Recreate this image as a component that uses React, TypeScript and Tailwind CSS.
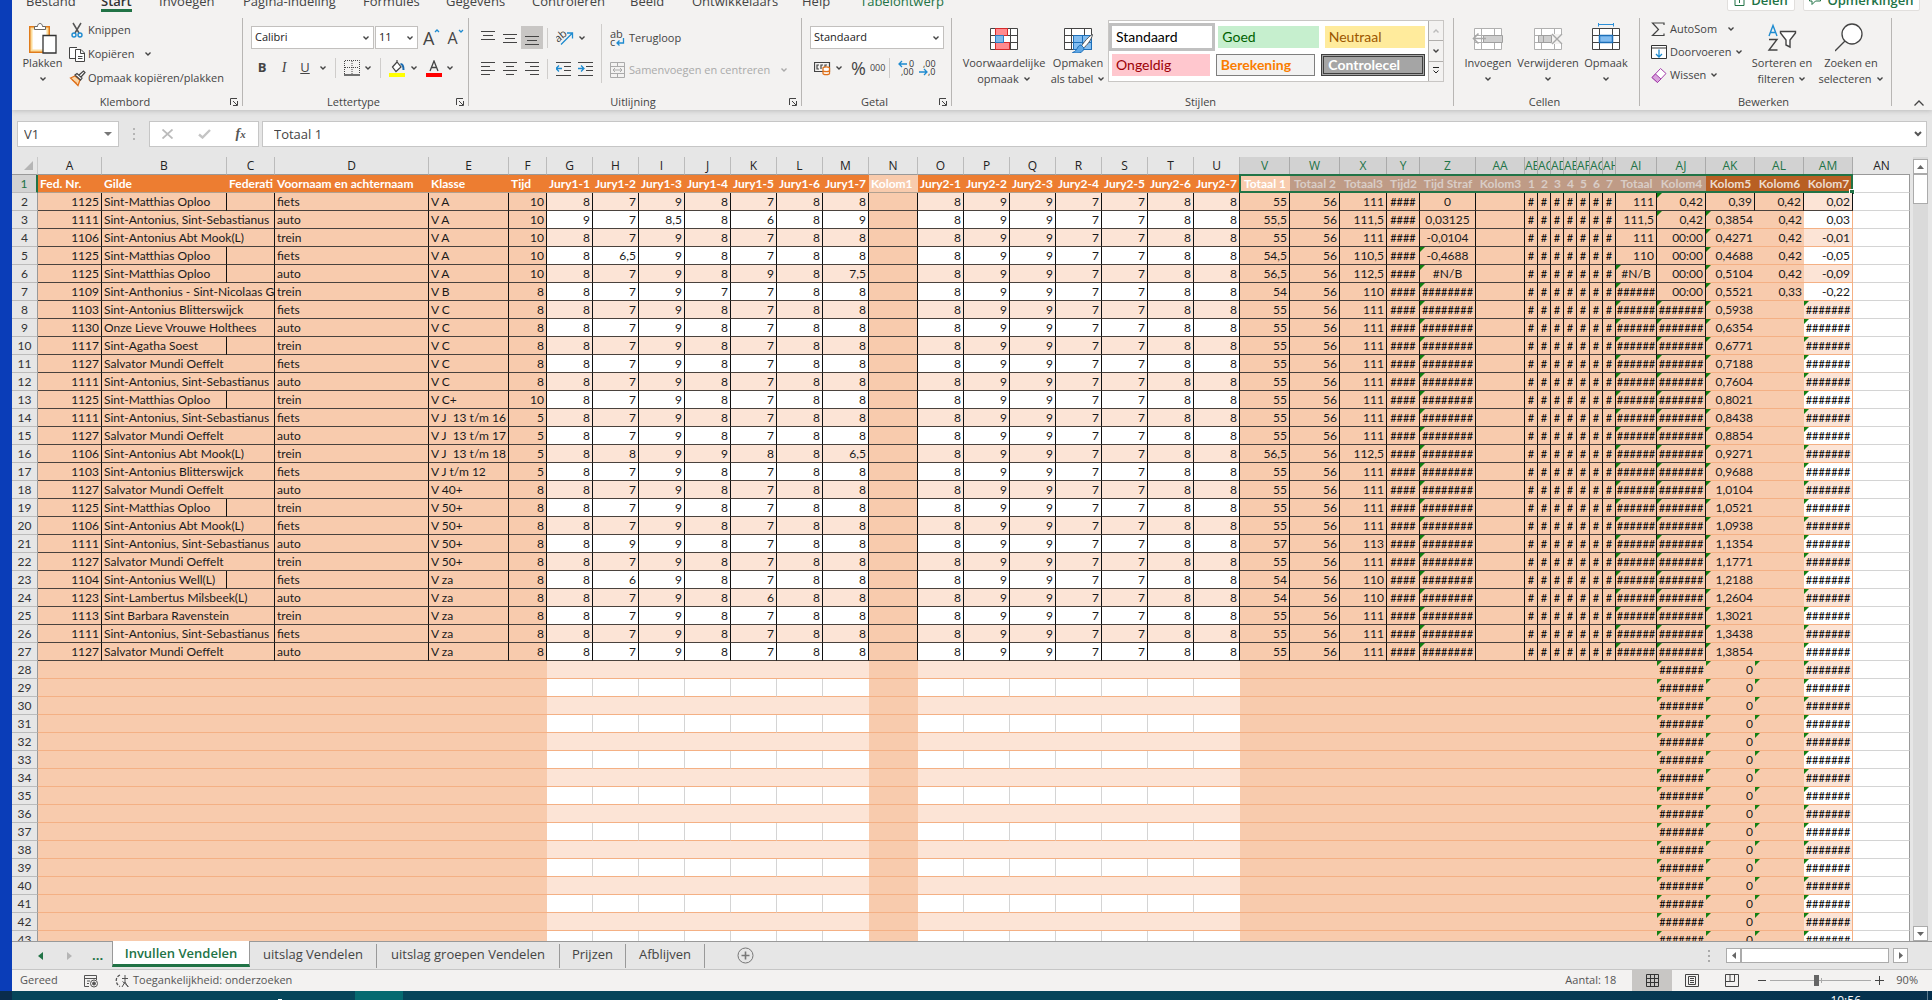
import React from "react";
import { clsx } from "clsx";

type Kids = { children?: React.ReactNode };

const Chev = ({ className = "text-[#444]" }: { className?: string }) => (
  <svg className={clsx("h-2 w-2 shrink-0", className)} viewBox="0 0 8 8" fill="none" stroke="currentColor" strokeWidth="1.4" aria-hidden="true">
    <path d="M1.5 2.5 4 5l2.5-2.5" />
  </svg>
);

const Launcher = () => (
  <button className="text-[#444]" aria-label="Meer opties">
    <svg className="size-2" viewBox="0 0 8 8" fill="none" stroke="currentColor">
      <path d="M.5 7V.5H7M3 3l4 4M7.500 3v4.500H3" />
    </svg>
  </button>
);

const Group = ({ label, launcher, className, children }: Kids & { label: string; launcher?: boolean; className: string }) => (
  <section className={clsx("flex", className)} aria-label={label}>
    <div className="flex min-w-0 flex-1 flex-col">
      <div className="flex flex-1 pt-2">{children}</div>
      <div className="flex h-4 items-center pr-1">
        <span className="w-2" />
        <span className="flex-1 text-center leading-4">{label}</span>
        <span className="flex w-2">{launcher && <Launcher />}</span>
      </div>
    </div>
    <div className="mt-1.5 mb-1 w-px shrink-0 bg-[#b8b6b4]" />
  </section>
);

const Sep = () => <span className="mx-1 h-5 w-px shrink-0 bg-[#cfcdcb]" />;

const Big = ({ icon, lines, arrow, className }: { icon: React.ReactNode; lines: string[]; arrow?: boolean; className: string }) => (
  <button className={clsx("flex shrink-0 flex-col items-center", className)}>
    <span className="flex h-[35px] items-center">{icon}</span>
    <span className="leading-4">{lines[0]}</span>
    <span className="flex h-4 items-center gap-1 leading-4">
      {lines[1]}
      {(arrow || lines[1]) && <Chev />}
    </span>
  </button>
);

const Small = ({ icon, text, arrow, gap = "gap-1", className }: { icon: React.ReactNode; text: string; arrow?: boolean; gap?: string; className?: string }) => (
  <button className={clsx("flex items-center whitespace-nowrap", className)}>
    <span className="flex w-[19px] shrink-0">{icon}</span>
    <span className={clsx("flex items-center", gap)}>
      {text}
      {arrow && <Chev />}
    </span>
  </button>
);

const Lines = ({ rows, label, active }: { rows: [number, number, number][]; label: string; active?: boolean }) => (
  <button aria-label={label} className={clsx("flex h-[23px] w-[22px] items-center justify-center", active && "bg-[#c8c6c4]")}>
    <svg width="14" height="16" viewBox="0 0 14 16" stroke="#444" fill="none">
      {rows.map(([x1, x2, y]) => (
        <path key={y} d={`M${x1} ${y}.5H${x2}`} />
      ))}
    </svg>
  </button>
);

const Combo = ({ label, value, className }: { label: string; value: string; className: string }) => (
  <label className={clsx("relative block h-[23px]", className)}>
    <span className="sr-only">{label}</span>
    <select className="h-full w-full appearance-none border border-[#c2c0be] bg-white px-[3px] text-[11px] text-[#222]" defaultValue={value}>
      <option>{value}</option>
    </select>
    <span className="pointer-events-none absolute top-2 right-1">
      <Chev />
    </span>
  </label>
);

const GridIcon = ({ children, color = "#444" }: Kids & { color?: string }) => (
  <svg width="32" height="30" viewBox="0 0 32 30" fill="none">
    <path d="M2.500 5.500h27v21h-27zM2.500 12.500h27M2.500 19.500h27M9.500 5.500v21M22.500 5.500v21" fill="#fff" stroke={color} />
    {children}
  </svg>
);

const PasteIcon = () => (
  <svg width="30" height="32" viewBox="0 0 30 32" fill="none">
    <path d="M2 5h19v25H2z" fill="#fff" stroke="#e07b1a" strokeWidth="2" />
    <path d="M3.500 6.500h16v22h-16z" stroke="#fbdc9a" strokeWidth="2" />
    <path d="M6.500 7.500v-3h3c0-4 5-4 5 0h3v3z" fill="#fff" stroke="#666" />
    <path d="M15 13.500h13V31H15z" fill="#fff" stroke="#333" strokeWidth="1.300" />
  </svg>
);

const CutIcon = () => (
  <svg width="16" height="16" viewBox="0 0 16 16" fill="none">
    <path d="m4 1 6 10M12 1 6 11" stroke="#555" strokeWidth="1.500" />
    <circle cx="5" cy="13" r="2" stroke="#1e8bd0" strokeWidth="1.400" />
    <circle cx="11" cy="13" r="2" stroke="#1e8bd0" strokeWidth="1.400" />
  </svg>
);

const CopyIcon = () => (
  <svg width="17" height="17" viewBox="0 0 17 17" fill="#fff" stroke="#444">
    <path d="M7 12.500H.5V1.500H8M6.500 15.500v-12H12l3.500 3.500v8.500zM11.500 3.500V7.500h4M9 10.500h4.500M9 12.500h4.500" />
  </svg>
);

const BrushIcon = () => (
  <svg width="17" height="17" viewBox="0 0 17 17" fill="none">
    <path d="M1.500 8 6 6l5 4-2 5.500z" fill="#fbd7a8" stroke="#e0711a" strokeWidth="1.300" />
    <path d="m3 9.500 5 4" stroke="#e0711a" />
    <path d="m6 5 2-1.500 5 4.500-1.500 2zM10 5l4.500-4 1.500 1.500L12 7" fill="#fff" stroke="#444" strokeWidth="1.200" />
  </svg>
);

const CondIcon = () => (
  <GridIcon>
    <path d="M7.500 5.500h12v7h-12zM7.500 19.500h14v7h-14z" fill="#ff8a8f" stroke="#d42a2a" />
    <path d="M7.500 12.500h8v7h-8z" fill="#7db9ea" stroke="#2b7cc4" />
  </GridIcon>
);

const TableIcon = () => (
  <GridIcon>
    <path d="M11.500 12.500h18v14h-18z" fill="#83bdf0" stroke="#1d6fb8" />
    <path d="M20.500 12.500v14M11.500 19.500h18" stroke="#1d6fb8" />
    <path d="M30.500 11.500c-3 1-9 8-11 11.500l2 2c3-2 8.500-9 9-13.500z" fill="#fff" stroke="#555" />
    <path d="M19 22c-4 0-3 6-8.500 7.500 5 1.500 11 .500 11.500-4.500z" fill="#5ea6e4" stroke="#1d6fb8" />
  </GridIcon>
);

const InsertIcon = () => (
  <GridIcon color="#b0b0b0">
    <path d="M11.500 12.500h19v7h-19z" fill="#cfcfcf" stroke="#a0a0a0" />
    <path d="M1 15.500h13M6.500 10.500l-5 5 5 5" stroke="#a8a8a8" strokeWidth="1.600" />
  </GridIcon>
);

const DeleteIcon = () => (
  <GridIcon color="#b0b0b0">
    <path d="M18 11h14v10H18z" fill="#f3f2f1" />
    <path d="M6.500 12.500h13v7h-13zM11.500 12.500v7" fill="#cfcfcf" stroke="#a0a0a0" />
    <path d="m20 11 10 10M30 11 20 21" stroke="#a8a8a8" strokeWidth="1.400" />
  </GridIcon>
);

const FormatIcon = () => (
  <GridIcon>
    <path d="M9.500 12.500h13v7h-13z" fill="#83bdf0" stroke="#1d6fb8" strokeWidth="1.500" />
    <path d="M8.500 1.500h15M8.500 0v3.500M23.500 0v3.500" stroke="#2b8fd8" />
  </GridIcon>
);

const SortIcon = () => (
  <svg width="30" height="30" viewBox="0 0 30 30" fill="none" strokeWidth="1.400">
    <path d="m2 13 4-10.500L10 13M3.500 9.500h5" stroke="#1e8bd0" />
    <path d="M2 16.500h8L2 27h8.500" stroke="#444" />
    <path d="M13.500 8.500h15v1.500L23 17v7l-4-2v-5l-5.500-7z" fill="#fff" stroke="#444" />
  </svg>
);

const FindIcon = () => (
  <svg width="32" height="32" viewBox="0 0 32 32" fill="none" stroke="#444" strokeWidth="1.300">
    <circle cx="17" cy="12" r="10" fill="#fff" />
    <path d="M10 19 0 29" />
  </svg>
);

const StyleCell = ({ text, className }: { text: string; className: string }) => (
  <button className={clsx("h-[22px] min-w-0 flex-1 px-1 text-left font-['Lato',sans-serif] text-sm", className)}>{text}</button>
);

const TABS: [string, string][] = [
  ["Bestand", "w-[75px]"],
  ["Start", "w-[58px]"],
  ["Invoegen", "w-[84px]"],
  ["Pagina-indeling", "w-[120px]"],
  ["Formules", "w-[83px]"],
  ["Gegevens", "w-[86px]"],
  ["Controleren", "w-[98px]"],
  ["Beeld", "w-[62px]"],
  ["Ontwikkelaars", "w-[110px]"],
  ["Help", "w-[58px]"],
  ["Tabelontwerp", "w-[90px]"],
];

const Ribbon = () => (
  <header className="relative z-10 shrink-0 bg-[#f3f2f1] text-[11px] text-[#444] shadow-[0_1px_5px_#bbb]">
    <nav className="flex h-3 items-end overflow-hidden text-[13px] leading-4 text-[#444]">
      <div className="flex min-w-0 flex-1 items-end pl-3.5">
        {TABS.map(([t, w]) => (
          <div key={t} className={clsx("flex shrink-0", w)}>
            <button
              className={clsx(
                "border-b-3 whitespace-nowrap",
                t === "Start" ? "border-[#217346] font-semibold text-[#333]" : t === "Tabelontwerp" ? "border-transparent text-[#217346]" : "border-transparent",
              )}
            >
              {t}
            </button>
          </div>
        ))}
      </div>
      <div className="flex gap-2 pr-3 font-semibold text-[#217346]">
        <button className="mb-px flex w-[68px] items-end justify-center gap-1.5 rounded-xs border border-[#e1dfdd] bg-white pb-0.5">
          <svg className="mb-0.5" width="11" height="12" viewBox="0 0 11 12" fill="none" stroke="#217346"><path d="M1 3.500v8h9v-8M5.500 9V0" /></svg>
          Delen
        </button>
        <button className="mb-px flex w-[117px] items-end justify-center gap-1.5 rounded-xs border border-[#e1dfdd] bg-white pb-0.5">
          <svg className="mb-0.5" width="12" height="12" viewBox="0 0 12 12" fill="none" stroke="#217346"><path d="M.5 0v7h2.500v3.500L6.500 7h5V0" /></svg>
          Opmerkingen
        </button>
      </div>
    </nav>

    <div className="flex h-[98px]">
      <Group label="Klembord" launcher className="w-[231px] shrink-0">
        <Big className="ml-2 w-[45px]" icon={<PasteIcon />} lines={["Plakken"]} arrow />
        <div className="ml-1 flex flex-col">
          <Small className="h-5" icon={<CutIcon />} text="Knippen" />
          <Small className="h-7" icon={<CopyIcon />} text="Kopiëren" arrow gap="gap-2.5" />
          <Small className="h-5" icon={<BrushIcon />} text="Opmaak kopiëren/plakken" />
        </div>
      </Group>

      <Group label="Lettertype" launcher className="w-[226px] shrink-0">
        <div className="flex flex-col gap-2 pt-1.5 pl-2">
          <div className="flex h-[23px] items-center gap-px">
            <Combo label="Lettertype" value="Calibri" className="w-[123px]" />
            <Combo label="Tekengrootte" value="11" className="w-[43px]" />
            <button className="ml-1 flex text-lg leading-5" aria-label="Lettertype vergroten">
              A<svg width="6" height="6" viewBox="0 0 6 6" fill="none" stroke="#1e8bd0" strokeWidth="1.300"><path d="m1 4 2-2 2 2" /></svg>
            </button>
            <button className="ml-1.5 flex text-base leading-5" aria-label="Lettertype verkleinen">
              A<svg width="6" height="6" viewBox="0 0 6 6" fill="none" stroke="#1e8bd0" strokeWidth="1.300"><path d="m1 2 2 2 2-2" /></svg>
            </button>
          </div>
          <div className="flex h-[22px] items-center text-[13px]">
            <button className="w-[22px] font-bold">B</button>
            <button className="w-[22px] font-['Liberation_Serif',serif] text-sm italic">I</button>
            <button className="w-[20px] underline">U</button>
            <Chev className="mx-1 text-[#444]" />
            <Sep />
            <button className="ml-1" aria-label="Randen">
              <svg width="16" height="16" viewBox="0 0 16 16" fill="none" stroke="#444"><path d="M.5 14V.5h15V14M8 1v14M1 7.500h14" strokeDasharray="1 1" /><path d="M0 15h16" strokeWidth="1.500" /></svg>
            </button>
            <Chev className="mx-1 text-[#444]" />
            <Sep />
            <button className="ml-1" aria-label="Opvulkleur">
              <svg width="17" height="17" viewBox="0 0 17 17" fill="none"><path d="M3.500 7 8 2l4 5-5 4.500zM8 2V0" fill="#fff" stroke="#444" strokeWidth="1.200" /><path d="M11.500 4c3 0 3 3 3 6" stroke="#1769b0" strokeWidth="2" /><path d="M0 13h16v4H0z" fill="#ff0" /></svg>
            </button>
            <Chev className="mx-1 text-[#444]" />
            <button className="ml-1" aria-label="Tekstkleur">
              <svg width="16" height="17" viewBox="0 0 16 17" fill="none"><path d="m4 11 4-10 4 10M5.500 7.500h5" stroke="#444" strokeWidth="1.300" /><path d="M0 13h16v4H0z" fill="#f00" /></svg>
            </button>
            <Chev className="mx-1 text-[#444]" />
          </div>
        </div>
      </Group>

      <Group label="Uitlijning" launcher className="w-[333px] shrink-0">
        <div className="flex flex-col gap-2 pt-1.5 pl-2">
          <div className="flex items-center">
            <Lines label="Boven uitlijnen" rows={[[0, 14, 1], [2, 12, 5], [0, 14, 9]]} />
            <Lines label="Midden uitlijnen" rows={[[0, 14, 4], [2, 12, 8], [0, 14, 12]]} />
            <Lines label="Onder uitlijnen" active rows={[[0, 14, 6], [2, 12, 10], [0, 14, 14]]} />
            <Sep />
            <button className="ml-1 flex items-center gap-1" aria-label="Afdrukstand">
              <svg width="18" height="17" viewBox="0 0 18 17" fill="none"><text x="-1" y="10" fontSize="11" fill="#444" transform="rotate(-40 6 8)">ab</text><path d="m5 15.500 11-11M11 4h5.500v5.500" stroke="#1e8bd0" strokeWidth="1.300" /></svg>
              <Chev />
            </button>
          </div>
          <div className="flex items-center">
            <Lines label="Links uitlijnen" rows={[[0, 14, 1], [0, 9, 5], [0, 14, 9], [0, 9, 13]]} />
            <Lines label="Centreren" rows={[[0, 14, 1], [3, 11, 5], [0, 14, 9], [3, 11, 13]]} />
            <Lines label="Rechts uitlijnen" rows={[[0, 14, 1], [5, 14, 5], [0, 14, 9], [5, 14, 13]]} />
            <Sep />
            <button className="ml-1" aria-label="Inspringing verkleinen">
              <svg width="15" height="14" viewBox="0 0 15 14" fill="none" stroke="#444"><path d="M0 .5h15M8 4.500h7M8 8.500h7M0 13.500h15" /><path d="M0 6.500h6M3 3.500l-3 3 3 3" stroke="#1e8bd0" strokeWidth="1.300" /></svg>
            </button>
            <button className="ml-[7px]" aria-label="Inspringing vergroten">
              <svg width="15" height="14" viewBox="0 0 15 14" fill="none" stroke="#444"><path d="M0 .5h15M8 4.500h7M8 8.500h7M0 13.500h15" /><path d="M0 6.500h6M3 3.500l3 3-3 3" stroke="#1e8bd0" strokeWidth="1.300" /></svg>
            </button>
          </div>
        </div>
        <div className="mt-1 ml-2 h-[59px] w-px bg-[#cfcdcb]" />
        <div className="flex flex-col gap-2 pt-1.5 pl-2">
          <Small className="h-6" text="Terugloop" icon={<svg width="15" height="17" viewBox="0 0 15 17" fill="none"><text x="0" y="8" fontSize="11" fill="#444">ab</text><text x="0" y="16" fontSize="11" fill="#444">c</text><path d="M13.500 8v5H7M9.500 10.500 7 13l2.500 2.500" stroke="#1e8bd0" strokeWidth="1.300" /></svg>} />
          <button className="flex h-6 items-center whitespace-nowrap text-[#aaa]">
            <svg className="mr-1" width="15" height="16" viewBox="0 0 15 16" fill="none" stroke="#aaa"><path d="M.5.5h14v15H.5zM.5 4.500h14M.5 11.500h14M7.500.5v4M7.500 11.500v4M3 8h9M5 6 3 8l2 2M10 6l2 2-2 2" /></svg>
            Samenvoegen en centreren
            <Chev className="ml-2.5 text-[#aaa]" />
          </button>
        </div>
      </Group>

      <Group label="Getal" launcher className="w-[150px] shrink-0">
        <div className="flex flex-col gap-2 pt-1.5 pl-2">
          <Combo label="Getalnotatie" value="Standaard" className="w-[134px]" />
          <div className="flex h-[22px] items-center">
            <button className="ml-1 flex items-center gap-1" aria-label="Financiële getalnotatie">
              <svg width="17" height="15" viewBox="0 0 17 15" fill="none"><path d="M.5 1.500h15v9H.5zM5 4H3v4h2M9 4H7v4M13 4h-2v3" stroke="#444" strokeWidth="1.200" /><path d="M9 7c0-1.500 6.500-1.500 6.500 0v5.500c0 1.500-6.500 1.500-6.500 0zM9 9.500c0 1.500 6.500 1.500 6.500 0" fill="#fff" stroke="#e0711a" strokeWidth="1.300" /></svg>
              <Chev />
            </button>
            <button className="ml-2 text-lg leading-5">%</button>
            <button className="ml-1 text-[9px]">000</button>
            <Sep />
            <button className="ml-1" aria-label="Meer decimalen">
              <svg width="17" height="16" viewBox="0 0 17 16" fill="none"><text x="11" y="7" fontSize="9" fill="#333">0</text><text x="3" y="15" fontSize="9" fill="#333">,00</text><path d="M9 4H1M4 1 1 4l3 3" stroke="#1e8bd0" strokeWidth="1.300" /></svg>
            </button>
            <button className="ml-1" aria-label="Minder decimalen">
              <svg width="17" height="16" viewBox="0 0 17 16" fill="none"><text x="4" y="7" fontSize="9" fill="#333">,00</text><text x="9" y="15" fontSize="9" fill="#333">,0</text><path d="M0 12h8M5 9l3 3-3 3" stroke="#1e8bd0" strokeWidth="1.300" /></svg>
            </button>
          </div>
        </div>
      </Group>

      <Group label="Stijlen" className="min-w-[400px] flex-1">
        <Big className="ml-2 w-[88px]" icon={<CondIcon />} lines={["Voorwaardelijke", "opmaak"]} />
        <Big className="w-[60px]" icon={<TableIcon />} lines={["Opmaken", "als tabel"]} />
        <div className="mr-[9px] flex h-[62px] min-w-0 flex-1 border border-[#c8c6c4] bg-white">
          <div className="flex min-w-0 flex-1 flex-col gap-1.5 p-[3px] pt-[5px]">
            <div className="flex gap-1.5">
              <StyleCell text="Standaard" className="leading-5 text-black outline-3 outline-[#c0c0c0]" />
              <StyleCell text="Goed" className="bg-[#c6efce] leading-5 text-[#006100]" />
              <StyleCell text="Neutraal" className="bg-[#ffeb9c] leading-5 text-[#9c5700]" />
            </div>
            <div className="flex gap-1.5">
              <StyleCell text="Ongeldig" className="bg-[#ffc7ce] leading-5 text-[#9c0006]" />
              <StyleCell text="Berekening" className="border border-[#7f7f7f] bg-[#f2f2f2] leading-4 font-bold text-[#fa7d00]" />
              <StyleCell text="Controlecel" className="border-3 border-double border-[#3f3f3f] bg-[#a5a5a5] leading-3 font-bold text-white" />
            </div>
          </div>
          <div className="flex w-[15px] flex-col divide-y divide-[#b0aeac] border-l border-[#b0aeac] bg-[#f3f2f1]">
            <button className="flex flex-1 items-center justify-center" aria-label="Vorige stijlen"><Chev className="rotate-180 text-[#bbb]" /></button>
            <button className="flex flex-1 items-center justify-center" aria-label="Volgende stijlen"><Chev /></button>
            <button className="flex flex-1 items-center justify-center" aria-label="Alle stijlen">
              <svg width="8" height="8" viewBox="0 0 8 8" fill="none" stroke="#222"><path d="M1 .5h6M1.500 3.500 4 6l2.500-2.500" /></svg>
            </button>
          </div>
        </div>
      </Group>

      <Group label="Cellen" className="w-[186px] shrink-0">
        <Big className="ml-1 w-[60px]" icon={<InsertIcon />} lines={["Invoegen"]} arrow />
        <Big className="w-[60px]" icon={<DeleteIcon />} lines={["Verwijderen"]} arrow />
        <Big className="w-[56px]" icon={<FormatIcon />} lines={["Opmaak"]} arrow />
      </Group>

      <Group label="Bewerken" className="w-[252px] shrink-0">
        <div className="flex w-[102px] shrink-0 flex-col pl-[11px]">
          <Small className="h-[18px]" text="AutoSom" arrow gap="gap-2.5" icon={<svg width="14" height="15" viewBox="0 0 14 15" fill="none" stroke="#444" strokeWidth="1.200"><path d="M13 3V1H1.500l6 6.500-6 6H13v-2" /></svg>} />
          <Small className="h-7" text="Doorvoeren" arrow icon={<svg width="16" height="15" viewBox="0 0 16 15" fill="none"><path d="M.5.5h15v13H.5zM.5 3h15" fill="#fff" stroke="#333" /><path d="M8 4.500v7M5 9l3 3 3-3" stroke="#1e8bd0" strokeWidth="1.300" /></svg>} />
          <Small className="h-[18px]" text="Wissen" arrow icon={<svg width="16" height="15" viewBox="0 0 16 15" fill="none" stroke="#a33eaa"><path d="m1 9.500 8.500-9L15 5.500l-8.500 9z" fill="#fff" /><path d="M1 9.500 4.500 6 10 11l-3.500 3.500z" fill="#d9a3dd" /></svg>} />
        </div>
        <Big className="ml-1 w-[72px]" icon={<SortIcon />} lines={["Sorteren en", "filteren"]} />
        <Big className="w-[66px]" icon={<FindIcon />} lines={["Zoeken en", "selecteren"]} />
      </Group>
      <div className="flex w-10 shrink-0 items-end justify-center pb-1">
        <button aria-label="Lint samenvouwen" className="ml-3.5">
          <svg width="10" height="6" viewBox="0 0 10 6" fill="none" stroke="#444" strokeWidth="1.300"><path d="m.5 5.500 4.500-4.500 4.500 4.500" /></svg>
        </button>
      </div>
    </div>
  </header>
);

const FormulaBar = () => (
  <div className="flex h-[47px] shrink-0 pt-[11px] pr-[5px] pl-[5px] text-[13px] text-[#444]">
    <div className="flex h-[26px] w-[102px] items-center border border-[#c6c6c6] bg-white pr-1.5">
      <input aria-label="Naamvak" defaultValue="V1" className="min-w-0 flex-1 bg-transparent pt-0.5 pl-1.5 outline-none" />
      <svg width="8" height="4" viewBox="0 0 8 4" fill="#777"><path d="M0 0h8L4 4z" /></svg>
    </div>
    <div className="flex h-[26px] w-[30px] flex-col items-center justify-center gap-[3px]">
      <i className="size-0.5 bg-[#b5b5b5]" /><i className="size-0.5 bg-[#b5b5b5]" /><i className="size-0.5 bg-[#b5b5b5]" />
    </div>
    <div className="flex h-[26px] w-[110px] items-center justify-around border border-[#c6c6c6] bg-white">
      <button aria-label="Annuleren"><svg width="11" height="10" viewBox="0 0 11 10" stroke="#bbb" strokeWidth="1.800"><path d="m.5.5 10 9M10.500.5l-10 9" /></svg></button>
      <button aria-label="Invoeren"><svg width="13" height="10" viewBox="0 0 13 10" fill="none" stroke="#c4c4c4" strokeWidth="2.400"><path d="m1 5.500 3.500 3L12 1" /></svg></button>
      <button className="font-['Liberation_Serif',serif] text-sm leading-4 font-bold text-[#555] italic">f<span className="text-[11px]">x</span></button>
    </div>
    <div className="ml-[3px] flex h-[26px] min-w-0 flex-1 items-center border border-[#c6c6c6] bg-white pr-1">
      <input aria-label="Formule" defaultValue="Totaal 1" className="min-w-0 flex-1 bg-transparent pt-0.5 pl-[11px] outline-none" />
      <svg width="8" height="6" viewBox="0 0 8 6" fill="none" stroke="#555" strokeWidth="2"><path d="m1 1 3 3 3-3" /></svg>
    </div>
  </div>
);

const COLS: [string, number, string][] = [
  ["A", 64, "Fed. Nr."], ["B", 125, "Gilde"], ["C", 48, "Federati"], ["D", 154, "Voornaam en achternaam"], ["E", 80, "Klasse"], ["F", 38, "Tijd"],
  ["G", 46, "Jury1-1"], ["H", 46, "Jury1-2"], ["I", 46, "Jury1-3"], ["J", 46, "Jury1-4"], ["K", 46, "Jury1-5"], ["L", 46, "Jury1-6"], ["M", 46, "Jury1-7"],
  ["N", 49, "Kolom1"],
  ["O", 46, "Jury2-1"], ["P", 46, "Jury2-2"], ["Q", 46, "Jury2-3"], ["R", 46, "Jury2-4"], ["S", 46, "Jury2-5"], ["T", 46, "Jury2-6"], ["U", 46, "Jury2-7"],
  ["V", 50, "Totaal 1"], ["W", 50, "Totaal 2"], ["X", 47, "Totaal3"], ["Y", 33, "Tijd2"], ["Z", 56, "Tijd Straf"], ["AA", 49, "Kolom3"],
  ["AB", 13, "1"], ["AC", 13, "2"], ["AD", 13, "3"], ["AE", 13, "4"], ["AF", 13, "5"], ["AG", 13, "6"], ["AH", 13, "7"],
  ["AI", 41, "Totaal"], ["AJ", 49, "Kolom4"], ["AK", 49, "Kolom5"], ["AL", 49, "Kolom6"], ["AM", 49, "Kolom7"],
];
const V = 21, AI = 34, AJ = 35, AK = 36, AL = 37, AM = 38;

const MATTHIAS = "Sint-Matthias Oploo", SEB = "Sint-Antonius, Sint-Sebastianus", MOOK = "Sint-Antonius Abt Mook(L)", SALV = "Salvator Mundi Oeffelt", BLIT = "Sint-Antonius Blitterswijck";
const STD = "8 7 9 8 7 8 8";

type Row = [string, string, string, string, string, string, string, string, string];
const ROWS: Row[] = [
  ["1125", MATTHIAS, "fiets", "V A", "10", STD, "55", "111", "0,39"],
  ["1111", SEB, "auto", "V A", "10", "9 7 8,5 8 6 8 9", "55,5", "111,5", "0,3854"],
  ["1106", MOOK, "trein", "V A", "10", STD, "55", "111", "0,4271"],
  ["1125", MATTHIAS, "fiets", "V A", "10", "8 6,5 9 8 7 8 8", "54,5", "110,5", "0,4688"],
  ["1125", MATTHIAS, "auto", "V A", "10", "8 7 9 8 9 8 7,5", "56,5", "112,5", "0,5104"],
  ["1109", "Sint-Anthonius - Sint-Nicolaas G", "trein", "V B", "8", "8 7 9 7 7 8 8", "54", "110", "0,5521"],
  ["1103", BLIT, "fiets", "V C", "8", STD, "55", "111", "0,5938"],
  ["1130", "Onze Lieve Vrouwe Holthees", "auto", "V C", "8", STD, "55", "111", "0,6354"],
  ["1117", "Sint-Agatha Soest", "trein", "V C", "8", STD, "55", "111", "0,6771"],
  ["1127", SALV, "fiets", "V C", "8", STD, "55", "111", "0,7188"],
  ["1111", SEB, "auto", "V C", "8", STD, "55", "111", "0,7604"],
  ["1125", MATTHIAS, "trein", "V C+", "10", STD, "55", "111", "0,8021"],
  ["1111", SEB, "fiets", "V J  13 t/m 16", "5", STD, "55", "111", "0,8438"],
  ["1127", SALV, "auto", "V J  13 t/m 17", "5", STD, "55", "111", "0,8854"],
  ["1106", MOOK, "trein", "V J  13 t/m 18", "5", "8 8 9 9 8 8 6,5", "56,5", "112,5", "0,9271"],
  ["1103", BLIT, "fiets", "V J t/m 12", "5", STD, "55", "111", "0,9688"],
  ["1127", SALV, "auto", "V 40+", "8", STD, "55", "111", "1,0104"],
  ["1125", MATTHIAS, "trein", "V 50+", "8", STD, "55", "111", "1,0521"],
  ["1106", MOOK, "fiets", "V 50+", "8", STD, "55", "111", "1,0938"],
  ["1111", SEB, "auto", "V 50+", "8", "8 9 9 8 7 8 8", "57", "113", "1,1354"],
  ["1127", SALV, "trein", "V 50+", "8", STD, "55", "111", "1,1771"],
  ["1104", "Sint-Antonius Well(L)", "fiets", "V za", "8", "8 6 9 8 7 8 8", "54", "110", "1,2188"],
  ["1123", "Sint-Lambertus Milsbeek(L)", "auto", "V za", "8", "8 7 9 8 6 8 8", "54", "110", "1,2604"],
  ["1113", "Sint Barbara Ravenstein", "trein", "V za", "8", STD, "55", "111", "1,3021"],
  ["1111", SEB, "fiets", "V za", "8", STD, "55", "111", "1,3438"],
  ["1127", SALV, "auto", "V za", "8", STD, "55", "111", "1,3854"],
];
const NO_SPILL = [2, 5, 6, 10, 13, 19, 23];
const Z = ["0", "0,03125", "-0,0104", "-0,4688", "#N/B"];
const TOT = ["111", "111,5", "111", "110", "#N/B"];
const TIME = ["0,42", "0,42", "00:00", "00:00", "00:00", "00:00"];
const ALV = ["0,42", "0,42", "0,42", "0,42", "0,42", "0,33"];
const AMV = ["0,02", "0,03", "-0,01", "-0,05", "-0,09", "-0,22"];

function valuesFor(n: number): string[] {
  const out: string[] = Array(39).fill("");
  if (n > 27) {
    out[AJ] = out[AM] = "#######";
    out[AK] = "0";
    return out;
  }
  const i = n - 2;
  const r = ROWS[i];
  return [
    r[0], r[1], "", r[2], r[3], r[4], ...r[5].split(" "), "", ..."8 9 9 7 7 8 8".split(" "),
    r[6], "56", r[7], "####", Z[i] ?? "########", "", ...Array(7).fill("#"),
    TOT[i] ?? "######", TIME[i] ?? "#######", r[8], ALV[i] ?? "", AMV[i] ?? "#######",
  ];
}

function flagged(n: number, c: number): boolean {
  if (c === 25) return n >= 5 && n <= 27;
  if (c === AI) return n >= 6 && n <= 27;
  if (c === AJ) return n <= 3 || n >= 8;
  if (c === AK) return n >= 3;
  if (c === AL) return n >= 28;
  if (c === AM) return n >= 8;
  return false;
}

const isJury = (c: number) => (c >= 6 && c <= 12) || (c >= 14 && c <= 20);

const BodyRow = ({ n }: { n: number }) => {
  const vals = valuesFor(n);
  const even = n % 2 === 0;
  const spill = n <= 27 && !NO_SPILL.includes(n);
  return (
    <tr className="h-[18px]">
      <RowHead n={n} />
      {vals.map((v, c) => {
        if (c === 2 && spill) return null;
        const banded = isJury(c) || c === AM;
        const inked = (n <= 27 && c <= AJ) || (n === 2 && c >= AK);
        const hashes = v.startsWith("##") || v === "#";
        return (
          <td
            key={c}
            colSpan={c === 1 && spill ? 2 : 1}
            className={clsx(
              "relative overflow-hidden border-b p-0 whitespace-pre",
              banded ? (even ? "bg-[#fce4d6]" : "bg-white") : "bg-[#f8cbad]",
              inked ? "border-b-[#4a423d]" : "border-b-[#f4b084]",
              inked && "border-r border-r-[#111]",
              !inked && c === AM && "border-r border-r-[#f4b084]",
              n > 27 && isJury(c) && !even && c !== 12 && c !== 20 && "border-r border-r-[#d4d4d4]",
              hashes || (c === 25 || (c === AI && v === "#N/B")) ? "text-center" : c >= 1 && c <= 4 ? "pl-0.5 text-left" : "pr-0.5 text-right",
              hashes && "text-[11px] text-black",
            )}
          >
            {flagged(n, c) && <i className="absolute top-0 left-0 size-0 border-t-5 border-r-5 border-t-[#128012] border-r-transparent" />}
            {v}
          </td>
        );
      })}
      <td className="border-r border-b border-r-[#999] border-b-[#d4d4d4] bg-white p-0" />
    </tr>
  );
};

const RowHead = ({ n }: { n: number }) => (
  <th scope="row" className={clsx("border-r border-b p-0 text-center text-xs leading-[17px] font-normal", n === 1 ? "border-r-2 border-r-[#217346] border-b-[#bbb] bg-[#d2d2d2] text-[#217346]" : "border-r-[#999] border-b-[#bbb] bg-[#e6e6e6] text-[#333]")}>
    {n}
  </th>
);

const Sheet = () => (
  <div className="flex min-h-0 flex-1 overflow-hidden">
    <div className="min-w-0 flex-1 overflow-hidden">
      <table className="w-full table-fixed border-separate border-spacing-0 font-['Lato',sans-serif] text-xs leading-[17px] text-[#1a1a1a]">
        <colgroup>
          <col style={{ width: 26 }} />
          {COLS.map(([l, w]) => <col key={l} style={{ width: w }} />)}
          <col />
        </colgroup>
        <thead className="font-['Open_Sans',sans-serif]">
          <tr className="h-[18px]">
            <th className="border-r border-b border-r-[#c9c9c9] border-b-[#999] p-0">
              <svg className="mr-1 ml-auto" width="9" height="9" viewBox="0 0 9 9" fill="#b5b5b5"><path d="M9 0v9H0z" /></svg>
            </th>
            {COLS.map(([l], c) => (
              <th
                key={l}
                scope="col"
                className={clsx(
                  "overflow-hidden border-r border-b p-0 text-center text-xs leading-[17px] font-normal",
                  c >= V ? "border-r-[#aaa] border-b-[#217346] bg-[#d2d2d2] text-[#217346]" : "border-r-[#bbb] border-b-[#999] text-[#222]",
                )}
              >
                {l}
              </th>
            ))}
            <th scope="col" className="border-b border-[#999] p-0 text-center leading-[17px] font-normal text-[#222]">AN</th>
          </tr>
        </thead>
        <tbody>
          <tr className="h-[18px] font-bold">
            <RowHead n={1} />
            {COLS.map(([l, , head], c) => (
              <td
                key={l}
                className={clsx(
                  "border-b border-[#b0a090] p-0 whitespace-nowrap",
                  c !== V && "overflow-hidden",
                  c >= V ? "text-center" : "pl-0.5",
                  c === V || c === 13 ? "bg-[#f8cbad] text-white" : c > V && c <= AJ ? "bg-[#bf9b86] text-[#d9cdc6]" : c >= AK ? "bg-[#b85f23] text-[#eddccf]" : "bg-[#ed7d31] text-white",
                )}
              >
                {c === V ? (
                  <div className="relative">
                    {head}
                    <div className="pointer-events-none absolute -top-px -left-px h-[19px] w-[614px] border-2 border-[#217346]">
                      <i className="absolute -right-1 -bottom-1 size-1.5 border border-white bg-[#217346]" />
                    </div>
                  </div>
                ) : head}
              </td>
            ))}
            <td className="border-r border-b border-r-[#999] border-b-[#d4d4d4] bg-white p-0" />
          </tr>
          {Array.from({ length: 42 }, (_, i) => <BodyRow key={i} n={i + 2} />)}
        </tbody>
      </table>
    </div>
    <div className="mr-1 ml-[3px] flex w-[15px] shrink-0 flex-col bg-[#dadada]">
      <button className="mt-0.5 flex h-[15px] shrink-0 items-center justify-center border border-[#ababab] bg-white" aria-label="Omhoog">
        <svg width="7" height="4" viewBox="0 0 7 4" fill="#666"><path d="M0 4h7L3.500 0z" /></svg>
      </button>
      <div className="h-[30px] shrink-0 border border-[#ababab] bg-white" />
      <button className="mt-auto flex h-[15px] shrink-0 items-center justify-center border border-[#ababab] bg-white" aria-label="Omlaag">
        <svg width="7" height="4" viewBox="0 0 7 4" fill="#666"><path d="M0 0h7L3.500 4z" /></svg>
      </button>
    </div>
  </div>
);

const SheetTabs = () => (
  <div className="flex h-7 shrink-0 border-t border-[#999] text-[13px] text-[#444]">
    <div className="flex w-[100px] items-center pl-[26px]">
      <button aria-label="Vorige bladen"><svg width="5" height="8" viewBox="0 0 5 8" fill="#217346"><path d="M5 0v8L0 4z" /></svg></button>
      <button className="ml-6" aria-label="Volgende bladen"><svg width="5" height="8" viewBox="0 0 5 8" fill="#b5b5b5"><path d="M0 0v8l5-4z" /></svg></button>
      <button className="ml-5 font-bold text-[#217346]">...</button>
    </div>
    <button className="-mt-px h-[26px] w-[138px] border-x border-b-3 border-x-[#999] border-b-[#217346] bg-white pt-0.5 font-semibold whitespace-nowrap text-[#217346]">Invullen Vendelen</button>
    {([["uitslag Vendelen", "w-[127px]"], ["uitslag groepen Vendelen", "w-[183px]"], ["Prijzen", "w-[66px]"], ["Afblijven", "w-[79px]"]] as const).map(([t, w]) => (
      <div key={t} className={clsx("mt-0.5 flex h-6 border-r border-[#999]", w)}>
        <button className="flex-1 pb-0.5 whitespace-nowrap">{t}</button>
      </div>
    ))}
    <button className="mt-1 ml-8 h-4.5" aria-label="Nieuw blad">
      <svg width="17" height="17" viewBox="0 0 17 17" fill="none" stroke="#777"><circle cx="8.500" cy="8.500" r="7.500" /><path d="M8.500 4.500v8M4.500 8.500h8" strokeWidth="1.600" /></svg>
    </button>
    <div className="ml-auto flex h-[15px] items-center self-center pr-6">
      <div className="mr-4 flex flex-col gap-[3px]">
        <i className="size-0.5 bg-[#aaa]" /><i className="size-0.5 bg-[#aaa]" /><i className="size-0.5 bg-[#aaa]" />
      </div>
      <button className="flex h-full w-[15px] items-center justify-center border border-[#ababab] bg-white" aria-label="Naar links"><svg width="4" height="7" viewBox="0 0 4 7" fill="#666"><path d="M4 0v7L0 3.500z" /></svg></button>
      <div className="mr-1 h-full w-[148px] border border-[#ababab] bg-white" />
      <button className="flex h-full w-[15px] items-center justify-center border border-[#ababab] bg-white" aria-label="Naar rechts"><svg width="4" height="7" viewBox="0 0 4 7" fill="#666"><path d="M0 0v7l4-3.500z" /></svg></button>
    </div>
  </div>
);

const StatusBar = () => (
  <footer className="flex h-[22px] shrink-0 items-center border-t border-[#c6c6c6] bg-[#f3f2f1] pr-3.5 pl-2 text-[11px] text-[#555]">
    <span className="w-16">Gereed</span>
    <button aria-label="Macro opnemen">
      <svg width="15" height="14" viewBox="0 0 15 14" fill="none" stroke="#555"><path d="M5 12.500H.5v-11h12V6M.5 4.500h12M3 7h3M3 9.500h2" /><circle cx="10" cy="9.500" r="3.500" /><circle cx="10" cy="9.500" r="1.500" fill="#555" /></svg>
    </button>
    <button className="ml-4 flex items-center gap-[3px]">
      <svg width="15" height="14" viewBox="0 0 15 14" fill="none" stroke="#555"><path d="M5 1C0 3 0 10 5 12.500" strokeDasharray="3 1.500" strokeWidth="1.300" /><path d="M7 4.500h6M10 1v7l-3 5M10 8l3 5M7.500 7.500l6 5" /></svg>
      Toegankelijkheid: onderzoeken
    </button>
    <span className="mr-4 ml-auto">Aantal: 18</span>
    <button className="flex h-[21px] w-10 items-center justify-center bg-[#c8c6c4]" aria-label="Normaal">
      <svg width="13" height="13" viewBox="0 0 13 13" fill="none" stroke="#333"><path d="M.5.5h12v12H.5zM.5 4.500h12M.5 8.500h12M4.500.5v12M8.500.5v12" /></svg>
    </button>
    <button className="flex w-10 justify-center" aria-label="Pagina-indeling">
      <svg width="14" height="13" viewBox="0 0 14 13" fill="none" stroke="#444"><path d="M.5.5h13v12H.5zM3.500 2.500h7v8h-7zM5 4.500h4M5 6.500h4M5 8.500h4" /></svg>
    </button>
    <button className="flex w-10 justify-center" aria-label="Pagina-eindevoorbeeld">
      <svg width="14" height="13" viewBox="0 0 14 13" fill="none" stroke="#444"><path d="M.5.5h13v12H.5zM.5 7.500h9v-7M5 .5v7" /></svg>
    </button>
    <button className="ml-1.5 h-px w-2 bg-[#444]" aria-label="Uitzoomen" />
    <label className="relative ml-1 flex w-[101px] items-center">
      <span className="sr-only">Zoomen</span>
      <span className="absolute left-1/2 h-[5px] w-px bg-[#aaa]" />
      <input
        type="range"
        min={0}
        max={200}
        defaultValue={90}
        className="relative h-3 w-full appearance-none bg-[linear-gradient(#aaa,#aaa)] bg-[length:100%_1px] bg-center bg-no-repeat [&::-webkit-slider-thumb]:h-[11px] [&::-webkit-slider-thumb]:w-[5px] [&::-webkit-slider-thumb]:appearance-none [&::-webkit-slider-thumb]:bg-[#666]"
      />
    </label>
    <button className="ml-1" aria-label="Inzoomen"><svg width="9" height="9" viewBox="0 0 9 9" stroke="#444"><path d="M0 4.500h9M4.500 0v9" /></svg></button>
    <span className="ml-3">90%</span>
  </footer>
);

export default function App() {
  return (
    <div className="flex h-screen flex-col overflow-hidden bg-[#0a3db8] font-['Open_Sans',sans-serif]">
      <main className="ml-3 flex min-h-0 flex-1 flex-col overflow-hidden bg-[#e6e6e6]">
        <Ribbon />
        <FormulaBar />
        <Sheet />
        <SheetTabs />
        <StatusBar />
      </main>
      <div className="flex h-[9px] shrink-0 overflow-hidden bg-[linear-gradient(90deg,#06455a_60%,#06304d)]">
        <span className="w-3 bg-[#0a2c4c]" />
        <span className="mt-2 ml-[266px] h-px w-1 bg-white" />
        <span className="ml-[73px] w-12 bg-[#056a70]" />
        <time className="mt-1 mr-[66px] ml-auto text-xs leading-3 text-white">10:56</time>
        <span className="mr-1 w-px bg-[#5d7c90]" />
      </div>
    </div>
  );
}
